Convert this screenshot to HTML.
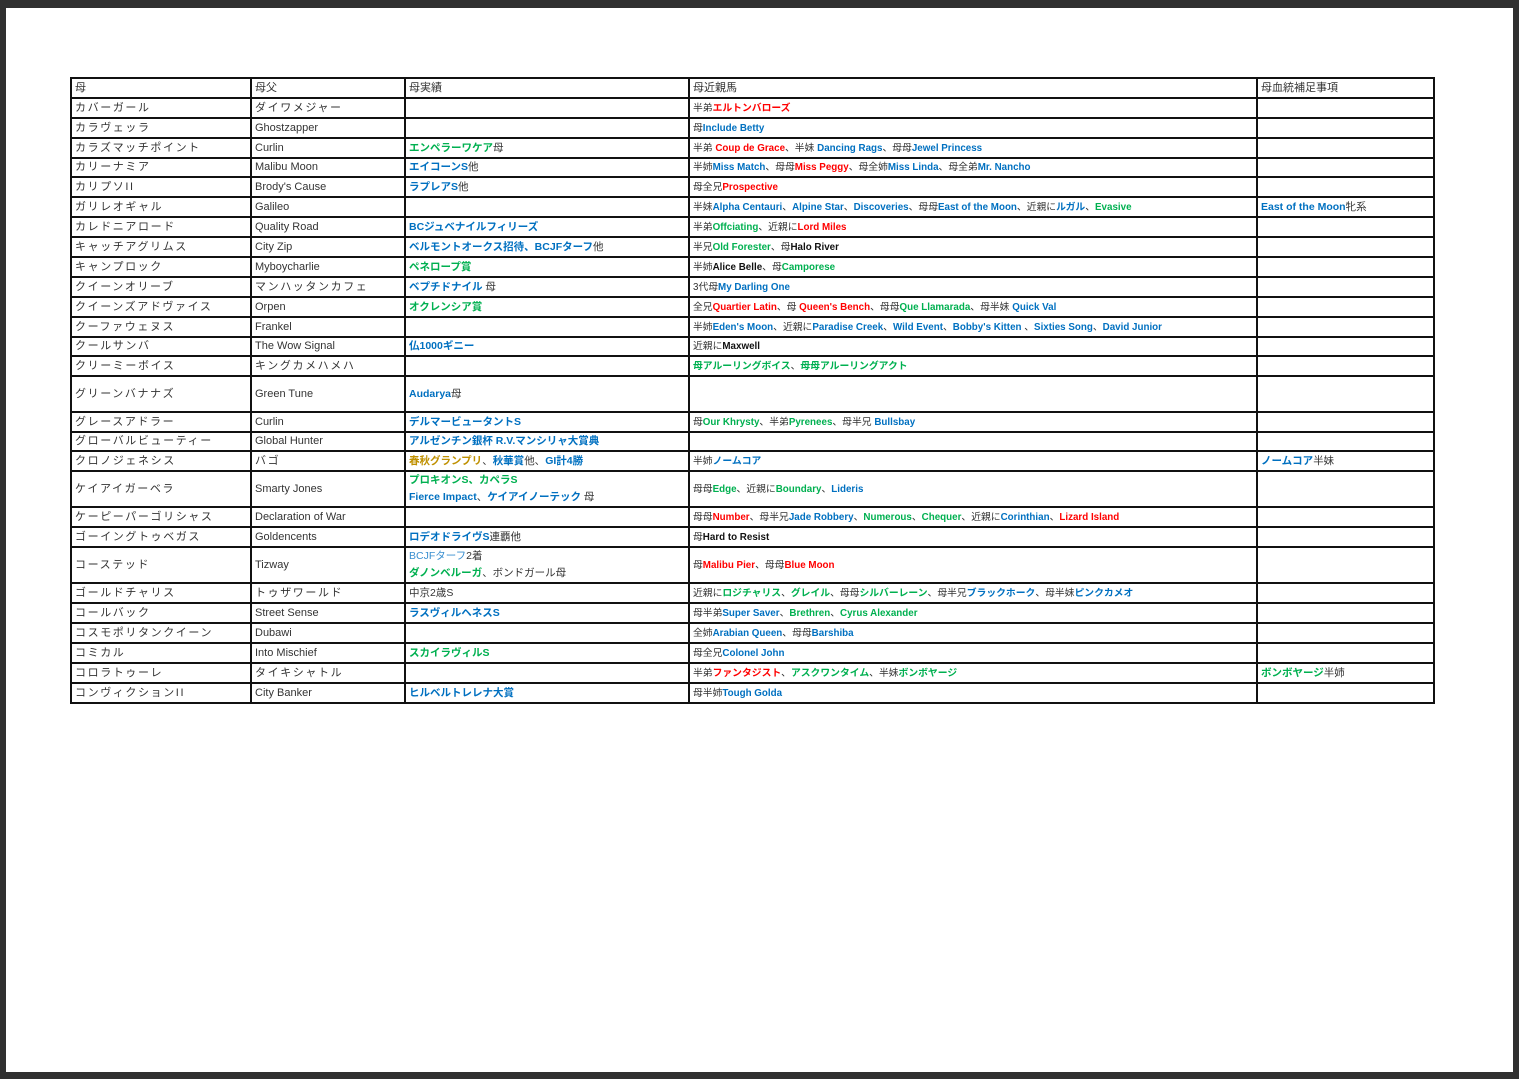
<!DOCTYPE html>
<html><head><meta charset="utf-8"><style>
html,body{margin:0;padding:0;background:#303030;width:1519px;height:1079px;overflow:hidden}
.page{position:absolute;left:6px;top:8px;width:1507px;height:1064px;background:#fff}
table{position:absolute;left:70px;top:77px;border-collapse:collapse;table-layout:fixed;font-family:"Liberation Sans","Noto Sans CJK JP",sans-serif;color:#333}
td{border:2px solid #111;padding:0 0 0 3px;font-size:11px;white-space:nowrap;overflow:hidden;line-height:13px;vertical-align:middle}
td.k{letter-spacing:1.6px}
td.m{font-size:9.8px}
.b{color:#0070c0;font-weight:bold}.g{color:#00b050;font-weight:bold}.r{color:#ff0000;font-weight:bold}.y{color:#bf9000;font-weight:bold}.k2{color:#111;font-weight:bold}
.lb{color:#3a8fd0}
td.c{font-size:10.5px}
</style></head><body><div class="page"></div>
<table>
<colgroup><col style="width:180px"><col style="width:154px"><col style="width:284px"><col style="width:568px"><col style="width:177px"></colgroup>
<tr style="height:20px"><td>母</td><td>母父</td><td>母実績</td><td>母近親馬</td><td>母血統補足事項</td></tr>
<tr style="height:20px"><td class="k">カバーガール</td><td class="k">ダイワメジャー</td><td></td><td class="m">半弟<span class="r">エルトンバローズ</span></td><td></td></tr>
<tr style="height:20px"><td class="k">カラヴェッラ</td><td>Ghostzapper</td><td></td><td class="m">母<span class="b">Include Betty</span></td><td></td></tr>
<tr style="height:20px"><td class="k">カラズマッチポイント</td><td>Curlin</td><td class="c"><span class="g">エンペラーワケア</span>母</td><td class="m">半弟 <span class="r">Coup de Grace</span>、半妹 <span class="b">Dancing Rags</span>、母母<span class="b">Jewel Princess</span></td><td></td></tr>
<tr style="height:19px"><td class="k">カリーナミア</td><td>Malibu Moon</td><td class="c"><span class="b">エイコーンS</span>他</td><td class="m">半姉<span class="b">Miss Match</span>、母母<span class="r">Miss Peggy</span>、母全姉<span class="b">Miss Linda</span>、母全弟<span class="b">Mr. Nancho</span></td><td></td></tr>
<tr style="height:20px"><td class="k">カリプソII</td><td>Brody's Cause</td><td class="c"><span class="b">ラプレアS</span>他</td><td class="m">母全兄<span class="r">Prospective</span></td><td></td></tr>
<tr style="height:20px"><td class="k">ガリレオギャル</td><td>Galileo</td><td></td><td class="m">半妹<span class="b">Alpha Centauri</span>、<span class="b">Alpine Star</span>、<span class="b">Discoveries</span>、母母<span class="b">East of the Moon</span>、近親に<span class="b">ルガル</span>、<span class="g">Evasive</span></td><td class="c"><span class="b">East of the Moon</span>牝系</td></tr>
<tr style="height:20px"><td class="k">カレドニアロード</td><td>Quality Road</td><td class="c"><span class="b">BCジュベナイルフィリーズ</span></td><td class="m">半弟<span class="g">Offciating</span>、近親に<span class="r">Lord Miles</span></td><td></td></tr>
<tr style="height:20px"><td class="k">キャッチアグリムス</td><td>City Zip</td><td class="c"><span class="b">ベルモントオークス招待、BCJFターフ</span>他</td><td class="m">半兄<span class="g">Old Forester</span>、母<span class="k2">Halo River</span></td><td></td></tr>
<tr style="height:20px"><td class="k">キャンプロック</td><td>Myboycharlie</td><td class="c"><span class="g">ペネロープ賞</span></td><td class="m">半姉<span class="k2">Alice Belle</span>、母<span class="g">Camporese</span></td><td></td></tr>
<tr style="height:20px"><td class="k">クイーンオリーブ</td><td class="k">マンハッタンカフェ</td><td class="c"><span class="b">ベプチドナイル</span> 母</td><td class="m">3代母<span class="b">My Darling One</span></td><td></td></tr>
<tr style="height:20px"><td class="k">クイーンズアドヴァイス</td><td>Orpen</td><td class="c"><span class="g">オクレンシア賞</span></td><td class="m">全兄<span class="r">Quartier Latin</span>、母 <span class="r">Queen's Bench</span>、母母<span class="g">Que Llamarada</span>、母半妹 <span class="b">Quick Val</span></td><td></td></tr>
<tr style="height:20px"><td class="k">クーファウェヌス</td><td>Frankel</td><td></td><td class="m">半姉<span class="b">Eden's Moon</span>、近親に<span class="b">Paradise Creek</span>、<span class="b">Wild Event</span>、<span class="b">Bobby's Kitten</span> 、<span class="b">Sixties Song</span>、<span class="b">David Junior</span></td><td></td></tr>
<tr style="height:19px"><td class="k">クールサンバ</td><td>The Wow Signal</td><td class="c"><span class="b">仏1000ギニー</span></td><td class="m">近親に<span class="k2">Maxwell</span></td><td></td></tr>
<tr style="height:20px"><td class="k">クリーミーボイス</td><td class="k">キングカメハメハ</td><td></td><td class="m"><span class="g">母アルーリングボイス</span>、<span class="g">母母アルーリングアクト</span></td><td></td></tr>
<tr style="height:36px"><td class="k">グリーンバナナズ</td><td>Green Tune</td><td class="c"><span class="b">Audarya</span>母</td><td class="m"></td><td></td></tr>
<tr style="height:20px"><td class="k">グレースアドラー</td><td>Curlin</td><td class="c"><span class="b">デルマービュータントS</span></td><td class="m">母<span class="g">Our Khrysty</span>、半弟<span class="g">Pyrenees</span>、母半兄 <span class="b">Bullsbay</span></td><td></td></tr>
<tr style="height:19px"><td class="k">グローバルビューティー</td><td>Global Hunter</td><td class="c"><span class="b">アルゼンチン銀杯 R.V.マンシリャ大賞典</span></td><td></td><td></td></tr>
<tr style="height:20px"><td class="k">クロノジェネシス</td><td class="k">バゴ</td><td class="c"><span class="y">春秋グランプリ</span>、<span class="b">秋華賞</span>他、<span class="b">GI計4勝</span></td><td class="m">半姉<span class="b">ノームコア</span></td><td class="c"><span class="b">ノームコア</span>半妹</td></tr>
<tr style="height:35px"><td class="k">ケイアイガーベラ</td><td>Smarty Jones</td><td class="c" style="line-height:17px"><span class="g">プロキオンS、カペラS</span><br><span class="b">Fierce Impact</span>、<span class="b">ケイアイノーテック</span> 母</td><td class="m">母母<span class="g">Edge</span>、近親に<span class="g">Boundary</span>、<span class="b">Lideris</span></td><td></td></tr>
<tr style="height:20px"><td class="k">ケーピーパーゴリシャス</td><td>Declaration of War</td><td></td><td class="m">母母<span class="r">Number</span>、母半兄<span class="b">Jade Robbery</span>、<span class="g">Numerous</span>、<span class="g">Chequer</span>、近親に<span class="b">Corinthian</span>、<span class="r">Lizard Island</span></td><td></td></tr>
<tr style="height:20px"><td class="k">ゴーイングトゥベガス</td><td>Goldencents</td><td class="c"><span class="b">ロデオドライヴS</span>連覇他</td><td class="m">母<span class="k2">Hard to Resist</span></td><td></td></tr>
<tr style="height:34px"><td class="k">コーステッド</td><td>Tizway</td><td class="c" style="line-height:17px"><span class="lb">BCJFターフ</span>2着<br><span class="g">ダノンベルーガ</span>、ボンドガール母</td><td class="m">母<span class="r">Malibu Pier</span>、母母<span class="r">Blue Moon</span></td><td></td></tr>
<tr style="height:20px"><td class="k">ゴールドチャリス</td><td class="k">トゥザワールド</td><td class="c">中京2歳S</td><td class="m">近親に<span class="g">ロジチャリス</span>、<span class="g">グレイル</span>、母母<span class="g">シルバーレーン</span>、母半兄<span class="b">ブラックホーク</span>、母半妹<span class="b">ピンクカメオ</span></td><td></td></tr>
<tr style="height:20px"><td class="k">コールバック</td><td>Street Sense</td><td class="c"><span class="b">ラスヴィルヘネスS</span></td><td class="m">母半弟<span class="b">Super Saver</span>、<span class="g">Brethren</span>、<span class="g">Cyrus Alexander</span></td><td></td></tr>
<tr style="height:20px"><td class="k">コスモポリタンクイーン</td><td>Dubawi</td><td></td><td class="m">全姉<span class="b">Arabian Queen</span>、母母<span class="b">Barshiba</span></td><td></td></tr>
<tr style="height:20px"><td class="k">コミカル</td><td>Into Mischief</td><td class="c"><span class="g">スカイラヴィルS</span></td><td class="m">母全兄<span class="b">Colonel John</span></td><td></td></tr>
<tr style="height:20px"><td class="k">コロラトゥーレ</td><td class="k">タイキシャトル</td><td></td><td class="m">半弟<span class="r">ファンタジスト</span>、<span class="g">アスクワンタイム</span>、半妹<span class="g">ボンボヤージ</span></td><td class="c"><span class="g">ボンボヤージ</span>半姉</td></tr>
<tr style="height:20px"><td class="k">コンヴィクションII</td><td>City Banker</td><td class="c"><span class="b">ヒルベルトレレナ大賞</span></td><td class="m">母半姉<span class="b">Tough Golda</span></td><td></td></tr>
</table>
</body></html>
